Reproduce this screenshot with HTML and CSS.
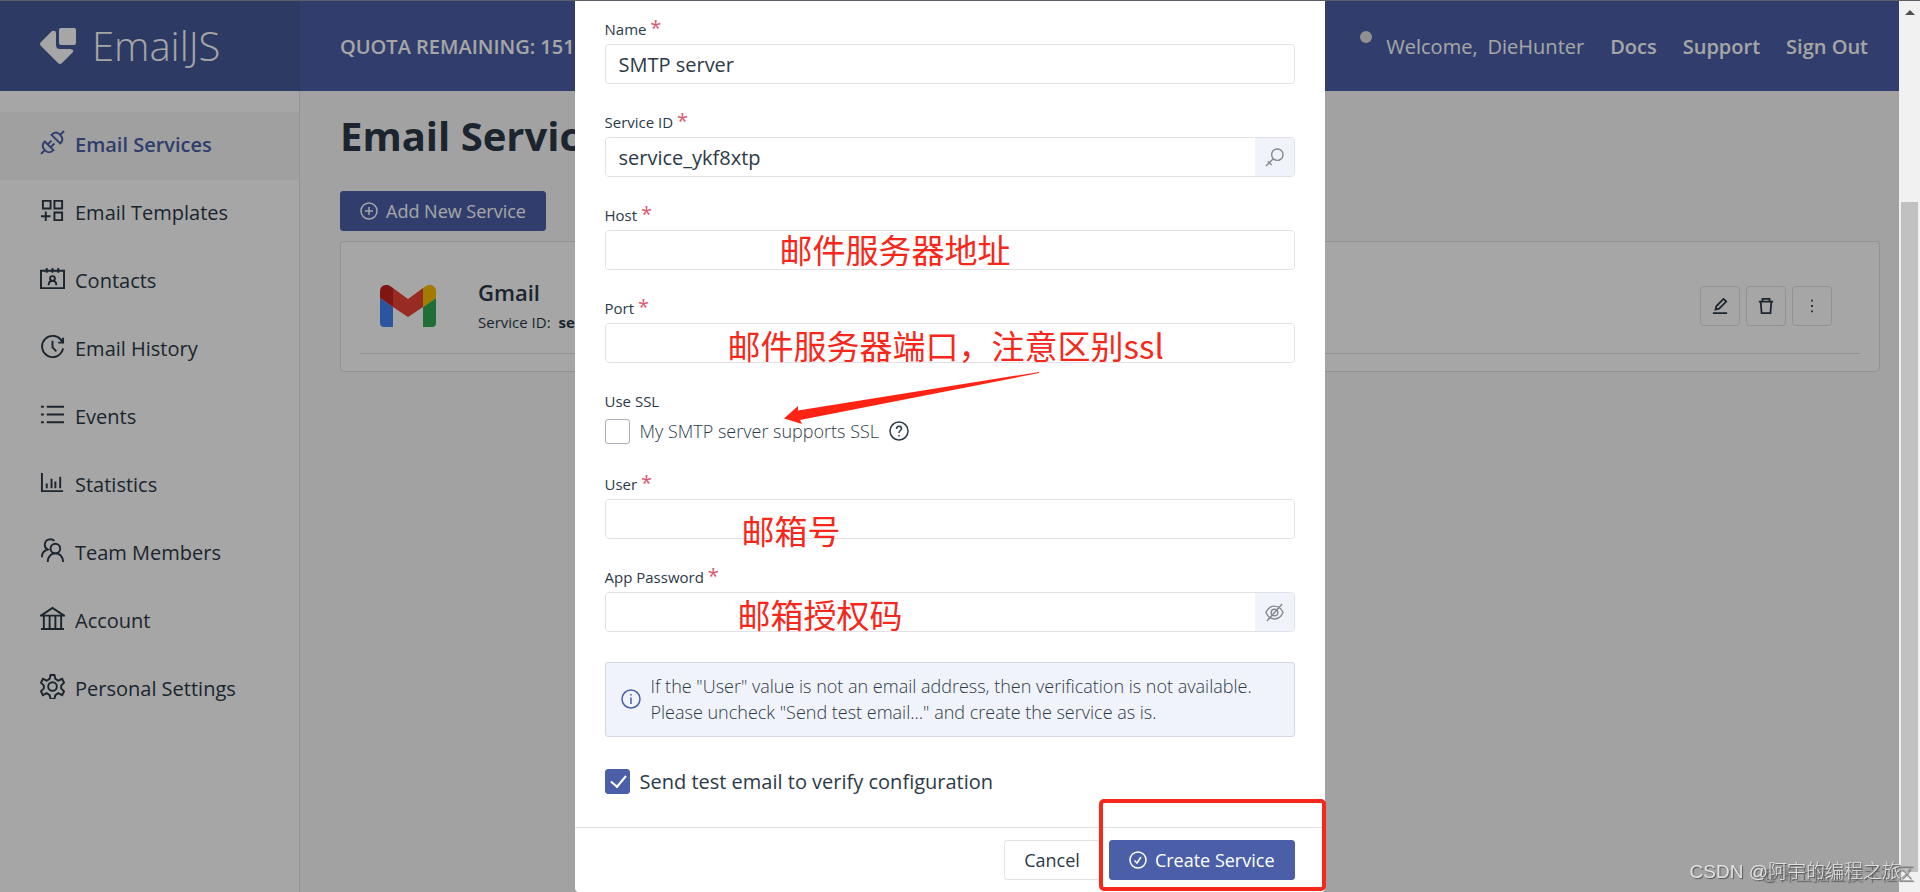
FILE: index.html
```html
<!DOCTYPE html>
<html lang="en">
<head>
    <meta charset="UTF-8">
    <meta name="viewport" content="width=device-width, initial-scale=1.0">
    <title>Email Services</title>
    <link rel="stylesheet" href="styles.css">
</head>
<body>
    <div class="app">
        <!-- Sidebar -->
        <aside class="sidebar">
            <div class="logo">
                <svg width="36" height="36" viewBox="0 0 36 36" fill="currentColor"><path d="M21 0h13q2 0 2 2v13q0 2-2 2H21q-2 0-2-2V2q0-2 2-2z"/><path d="M12 3q4-1 4 2v12q0 4 4 4h10q4 0 3 3L22 35q-2 2-4 0L1 18q-2-2 0-4z"/></svg>
                <span>EmailJS</span>
            </div>
            <nav class="menu">
                <a href="#" class="menu-item active">
                    <svg viewBox="0 0 26 26"><path d="M1 25l4-4M21 5l4-4M5 12l9 9c-3 3-6 3-9 0s-3-6 0-9zM12 5l9 9c3-3 3-6 0-9s-6-3-9 0zM8 15l4-4M11 18l4-4"/></svg>
                    Email Services
                </a>
                <a href="#" class="menu-item">
                    <svg viewBox="0 0 26 26"><path d="M3 3h8v8H3zM15 3h8v8h-8zM15 15h8v8h-8zM6 14v10M1 19h10"/></svg>
                    Email Templates
                </a>
                <a href="#" class="menu-item">
                    <svg viewBox="0 0 26 26"><path d="M1 5h24v18H1zM7 2v5M13 2v5M19 2v5M9 20c0-6 8-6 8 0"/><circle cx="13" cy="13" r="2.5"/></svg>
                    Contacts
                </a>
                <a href="#" class="menu-item">
                    <svg viewBox="0 0 26 26"><path d="M23 8A11 11 0 1 0 24 15M24 4v5h-5M13 7v7l4 4"/></svg>
                    Email History
                </a>
                <a href="#" class="menu-item">
                    <svg viewBox="0 0 26 26"><path d="M7 5h18M7 13h18M7 21h18M1 5h3M1 13h3M1 21h3"/></svg>
                    Events
                </a>
                <a href="#" class="menu-item">
                    <svg viewBox="0 0 26 26"><path d="M2 3v19h22M7 19v-5M12 19V9M16 19v-7M21 19V7"/></svg>
                    Statistics
                </a>
                <a href="#" class="menu-item">
                    <svg viewBox="0 0 26 26"><circle cx="16" cy="11" r="5"/><path d="M8 25c0-12 16-12 16 0M15 3C12 0 5 1 5 7c0 2 1 4 3 5-4 1-6 4-6 8"/></svg>
                    Team Members
                </a>
                <a href="#" class="menu-item">
                    <svg viewBox="0 0 26 26"><path d="M1 10h24L13 2zM1 24h24M4 10v14M10 10v14M16 10v14M22 10v14"/></svg>
                    Account
                </a>
                <a href="#" class="menu-item">
                    <svg viewBox="0 0 26 26"><circle cx="13" cy="13" r="4.5"/><path d="M11 1h4l1 4 3 2 4-2 2 4-3 3v3l3 3-2 4-4-2-3 2-1 4h-4l-1-4-3-2-4 2-2-4 3-3v-3L1 9l2-4 4 2 3-2z"/></svg>
                    Personal Settings
                </a>
            </nav>
        </aside>

        <!-- Page -->
        <div class="page">
            <header class="topbar">
                <span class="quota">QUOTA REMAINING: 151</span>
                <div class="topbar-links">
                    <span class="status-dot"></span>
                    <span class="welcome">Welcome,</span>
                    <a href="#" class="user">DieHunter</a>
                    <a href="#">Docs</a>
                    <a href="#">Support</a>
                    <a href="#">Sign Out</a>
                </div>
            </header>
            <main class="content">
                <h1>Email Services</h1>
                <button type="button" class="btn btn-primary">
                    <svg viewBox="0 0 18 18"><circle cx="9" cy="9" r="8"/><path d="M9 5v8M5 9h8"/></svg>
                    Add New Service
                </button>
                <section class="card">
                    <div class="service">
                        <svg class="gmail" width="56" height="42" viewBox="0 0 56 42"><path fill="#4285f4" d="M0 13l13 9v20H4q-4 0-4-4z"/><path fill="#34a853" d="M56 13l-13 9v20h9q4 0 4-4z"/><path fill="#ea4335" d="M13 3l15 11L43 3v19L28 32 13 22z"/><path fill="#c5221f" d="M0 13V6c0-5 6-8 10-5l3 2v19z"/><path fill="#fbbc04" d="M56 13V6c0-5-6-8-10-5l-3 2v19z"/></svg>
                        <div class="service-info">
                            <h2>Gmail</h2>
                            <p>Service ID: <b>se</b></p>
                        </div>
                        <div class="service-actions">
                            <button type="button" aria-label="Edit"><svg viewBox="0 0 18 18"><path d="M1 17h16M4 13l1-4 8-8 3 3-8 8z"/></svg></button>
                            <button type="button" aria-label="Delete"><svg viewBox="0 0 18 18"><path d="M1 4h16M5 4V1h8v3M3 4l1 13h10l1-13"/></svg></button>
                            <button type="button" aria-label="More"><svg viewBox="0 0 18 18"><path d="M8 3h2M8 9h2M8 15h2"/></svg></button>
                        </div>
                    </div>
                </section>
            </main>
        </div>
    </div>

    <!-- Add service dialog -->
    <div class="overlay">
        <form class="modal">
            <div class="modal-body">
                <div class="field">
                    <label for="name">Name <i>*</i></label>
                    <div class="control"><input type="text" id="name" value="SMTP server"></div>
                </div>
                <div class="field">
                    <label for="service-id">Service ID <i>*</i></label>
                    <div class="control">
                        <input type="text" id="service-id" value="service_ykf8xtp">
                        <button type="button" aria-label="Generate ID"><svg viewBox="0 0 20 20"><circle cx="13" cy="7" r="6"/><path d="M9 11l-8 8M3 14l4 4"/></svg></button>
                    </div>
                </div>
                <div class="field">
                    <label for="host">Host <i>*</i></label>
                    <div class="control"><input type="text" id="host"></div>
                </div>
                <div class="field">
                    <label for="port">Port <i>*</i></label>
                    <div class="control"><input type="text" id="port"></div>
                </div>
                <div class="field">
                    <label for="ssl">Use SSL</label>
                    <div class="check-row">
                        <input type="checkbox" id="ssl">
                        <label for="ssl">My SMTP server supports SSL</label>
                        <svg class="help" viewBox="0 0 20 20"><circle cx="10" cy="10" r="9"/><path d="M7.500 8c0-4 5-3.500 5-.5 0 2-2.500 2-2.500 4.500M10 14v1.500"/></svg>
                    </div>
                </div>
                <div class="field">
                    <label for="user">User <i>*</i></label>
                    <div class="control"><input type="text" id="user"></div>
                </div>
                <div class="field">
                    <label for="password">App Password <i>*</i></label>
                    <div class="control">
                        <input type="password" id="password">
                        <button type="button" aria-label="Show password"><svg viewBox="0 0 20 20"><path d="M1 10c4-9 14-9 18 0-4 9-14 9-18 0zM2 19L18 1"/><circle cx="10" cy="10" r="3.500"/></svg></button>
                    </div>
                </div>
                <div class="notice">
                    <svg viewBox="0 0 20 20"><circle cx="10" cy="10" r="9"/><path d="M10 8.500V15M10 5v1.500"/></svg>
                    <p>If the "User" value is not an email address, then verification is not available.<br>Please uncheck "Send test email..." and create the service as is.</p>
                </div>
                <div class="check-row large">
                    <input type="checkbox" id="test" checked>
                    <label for="test">Send test email to verify configuration</label>
                </div>
            </div>
            <div class="modal-footer">
                <button type="button" class="btn btn-plain">Cancel</button>
                <button type="submit" class="btn btn-primary">
                    <svg viewBox="0 0 18 18"><circle cx="9" cy="9" r="8"/><path d="M5.500 9.500L8 12l4-6"/></svg>
                    Create Service
                </button>
            </div>

            <!-- Notes drawn over the form -->
            <span class="note note-host">邮件服务器地址</span>
            <span class="note note-port">邮件服务器端口，注意区别ssl</span>
            <span class="note note-user">邮箱号</span>
            <span class="note note-password">邮箱授权码</span>
            <svg class="arrow" width="256" height="54" viewBox="0 0 256 54"><path fill="#ff2314" d="M255 0L14 38.500V34L0 46.500 18 52l-2-4L255 1z"/></svg>
            <div class="highlight"></div>
        </form>
    </div>

    <div class="scrollbar"><span class="scroll-arrow"></span><span class="scroll-thumb"></span></div>
    <div class="watermark watermark-back">@稀土掘金技术社区</div>
    <div class="watermark">CSDN @阿宇的编程之旅</div>
</body>
</html>
```
FILE: styles.css
```css
* {
    box-sizing: border-box;
}
body {
    margin: 0;
    padding-right: 21px;
    font-family: "Open Sans", "Noto Sans CJK SC", sans-serif;
    font-size: 20px;
    color: #2c3a47;
    background-color: #f9f9f9;
}
body::before {
    content: "";
    position: fixed;
    top: 0;
    left: 0;
    right: 0;
    height: 1px;
    background-color: #5c6066;
    z-index: 5;
}
h1, h2, p {
    margin: 0;
}
a {
    color: inherit;
    text-decoration: none;
}
button, input {
    font-family: inherit;
    color: inherit;
}
svg {
    flex: none;
    fill: none;
    stroke: currentColor;
    stroke-width: 1.5;
}
.app {
    display: flex;
    min-height: 100vh;
}

/* Sidebar */
.sidebar {
    width: 300px;
    flex: none;
    background-color: #fff;
    border-right: 1px solid #e4e4e4;
}
.logo {
    display: flex;
    align-items: center;
    gap: 16px;
    height: 91px;
    margin-right: -1px;
    padding-left: 40px;
    background-color: #46599a;
    color: #fff;
    font-size: 40px;
    font-weight: 300;
}
.logo svg {
    fill: currentColor;
    stroke: none;
}
.menu {
    padding-top: 21px;
}
.menu-item {
    display: flex;
    align-items: center;
    gap: 10px;
    height: 68px;
    padding: 0 0 4px 40px;
}
.menu-item svg {
    width: 25px;
    height: 25px;
    margin-bottom: 4px;
    stroke-width: 2;
}
.menu-item.active {
    background-color: #f6f6f6;
    color: #4a5fa8;
    font-weight: 600;
}

/* Page */
.page {
    flex: 1;
    min-width: 0;
}
.topbar {
    display: flex;
    align-items: center;
    justify-content: space-between;
    height: 91px;
    padding: 2px 31px 0 40px;
    background-color: #4a5fa8;
    color: #fff;
    font-weight: 600;
}
.topbar-links {
    display: flex;
    align-items: center;
    gap: 26px;
}
.status-dot {
    width: 12px;
    height: 12px;
    margin: 0 -12px 20px 0;
    border-radius: 50%;
    background-color: #ddd;
}
.welcome {
    margin-right: -16px;
    font-weight: 400;
}
.user {
    font-weight: 400;
}
.content {
    padding: 15px 19px 0 40px;
}
h1 {
    margin-bottom: 25px;
    font-size: 40px;
    line-height: 60px;
    font-weight: 700;
}
.btn {
    display: flex;
    align-items: center;
    gap: 8px;
    height: 40px;
    padding: 0 19px;
    border: 1px solid #4a5fa8;
    border-radius: 3px;
    font-size: 18px;
    cursor: pointer;
}
.btn svg {
    width: 18px;
    height: 18px;
}
.btn-primary {
    background-color: #4a5fa8;
    color: #fff;
}
.btn-plain {
    background-color: #fff;
    border-color: #e1e1e6;
}
.card {
    height: 131px;
    margin-top: 10px;
    padding: 0 19px;
    background-color: #fff;
    border: 1px solid #e1e1e1;
    border-radius: 4px;
}
.service {
    display: flex;
    align-items: center;
    height: 112px;
    padding: 16px 28px 0 20px;
    border-bottom: 1px solid #e1e1e1;
}
.gmail {
    stroke: none;
}
.service-info {
    flex: 1;
    padding-left: 42px;
}
h2 {
    font-size: 22px;
    line-height: 32px;
    font-weight: 600;
}
.service-info p {
    font-size: 15px;
    line-height: 28px;
}
.service-info b {
    margin-left: 4px;
}
.service-actions {
    display: flex;
    gap: 6px;
}
.service-actions button {
    display: flex;
    align-items: center;
    justify-content: center;
    width: 40px;
    height: 40px;
    padding: 0;
    background-color: #fff;
    border: 1px solid #e1e1e1;
    border-radius: 4px;
}
.service-actions svg {
    width: 16px;
    height: 16px;
    stroke-width: 2;
}

/* Dialog */
.overlay {
    position: fixed;
    inset: 0 21px 0 0;
    display: flex;
    justify-content: center;
    align-items: flex-start;
    background-color: rgba(0, 0, 0, 0.35);
}
.modal {
    position: relative;
    width: 750px;
    background-color: #fff;
    border-radius: 0 0 4px 4px;
}
.modal-body {
    padding: 20px 30px 31px;
}
.field {
    margin-bottom: 29px;
}
.field > label {
    display: block;
    height: 24px;
    font-size: 15px;
    line-height: 18px;
}
.field i {
    font-size: 20px;
    line-height: 16px;
    font-style: normal;
    color: #dc5570;
}
.control {
    display: flex;
    height: 40px;
    border: 1px solid #e1e1e6;
    border-radius: 4px;
    overflow: hidden;
}
.control input {
    flex: 1;
    min-width: 0;
    padding: 0 13px;
    border: 0;
    outline: 0;
    font-size: 20px;
    background-color: #fff;
}
.control button {
    display: flex;
    align-items: center;
    justify-content: center;
    width: 39px;
    padding: 0;
    border: 0;
    background-color: #f1f3fa;
    color: #85888f;
}
.control button svg {
    width: 19px;
    height: 19px;
}
.check-row {
    display: flex;
    align-items: center;
    height: 30px;
    gap: 10px;
    font-size: 18px;
    font-weight: 300;
}
.check-row.large {
    font-size: 20px;
    font-weight: 400;
}
.check-row input {
    appearance: none;
    width: 25px;
    height: 25px;
    margin: 0;
    border: 1px solid #aaadb5;
    border-radius: 3px;
    background-color: #fff;
}
.check-row input:checked {
    background-color: #4a5fa8;
    border-color: #4a5fa8;
}
.check-row input:checked::after {
    content: "";
    display: block;
    width: 7px;
    height: 13px;
    margin: 2px 0 0 8px;
    border: solid #fff;
    border-width: 0 2px 2px 0;
    transform: rotate(40deg);
}
.help, .notice svg {
    width: 20px;
    height: 20px;
}
.notice {
    display: flex;
    align-items: center;
    gap: 10px;
    margin: 30px 0 29px;
    padding: 10px 15px 11px;
    background-color: #f1f3fb;
    border: 1px solid #d3d6e6;
    border-radius: 3px;
    font-size: 18px;
    font-weight: 300;
    line-height: 26px;
}
.notice svg {
    color: #4a5fa8;
}
.modal-footer {
    display: flex;
    justify-content: flex-end;
    gap: 9px;
    padding: 12px 30px;
    border-top: 1px solid #e1e1e4;
}

/* Notes */
.note {
    position: absolute;
    font-size: 33px;
    line-height: 46px;
    font-family: "Noto Sans CJK SC", sans-serif;
    white-space: nowrap;
    color: #f5281b;
}
.note-host {
    top: 226px;
    left: 205px;
}
.note-port {
    top: 322px;
    left: 153px;
}
.note-user {
    top: 507px;
    left: 167px;
}
.note-password {
    top: 591px;
    left: 163px;
}
.arrow {
    position: absolute;
    top: 372px;
    left: 209px;
    stroke: none;
}
.highlight {
    position: absolute;
    right: -1px;
    bottom: 1px;
    width: 227px;
    height: 92px;
    border: 4px solid #f5281b;
    border-radius: 5px;
    pointer-events: none;
}

/* Scrollbar */
.scrollbar {
    position: fixed;
    top: 0;
    right: 0;
    bottom: 0;
    width: 21px;
    padding: 10px 2px 20px;
    background-color: #f1f1f1;
    display: flex;
    flex-direction: column;
    align-items: center;
}
.scroll-arrow {
    border: solid transparent;
    border-width: 0 5px 5px;
    border-bottom-color: #505050;
}
.scroll-thumb {
    flex: 1;
    width: 17px;
    margin-top: 187px;
    background-color: #c1c1c1;
}
.watermark {
    position: fixed;
    right: 19px;
    bottom: 6px;
    font-size: 19px;
    line-height: 28px;
    font-family: "Liberation Sans", "Noto Sans CJK SC", sans-serif;
    font-weight: 300;
    color: #e2e2e2;
    text-shadow: 1px 1px 1px #555;
}
.watermark-back {
    right: 6px;
    bottom: 3px;
    font-size: 17px;
    color: #999;
}
```
